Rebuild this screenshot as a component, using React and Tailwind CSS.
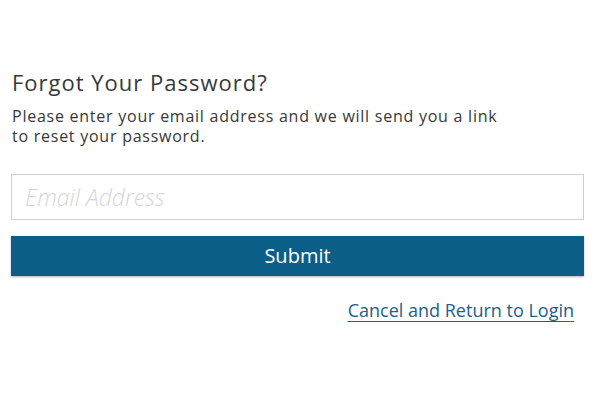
export default function App() {
  return (
    <div className="w-[600px] h-[400px] bg-white" style={{ fontFamily: "'Open Sans', sans-serif" }}>
      <div className="pl-[11px] pr-[16px] pt-[67px]">
        <h1 className="text-[22px] leading-[30px] tracking-[1px] text-[#383838] ml-[1px]">Forgot Your Password?</h1>
        <p className="mt-[10px] text-[16px] leading-[19.5px] tracking-[0.75px] text-[#383838] ml-[1px]">
          Please enter your email address and we will send you a link
          <br />
          to reset your password.
        </p>
        <input
          type="text"
          placeholder="Email Address"
          className="mt-[28px] block w-full h-[46px] border border-[#cfcfcf] px-[13px] text-[23px] font-light italic placeholder:text-[#d6d6d6] outline-none"
        />
        <button className="mt-[16px] block w-full h-[40px] bg-[#0b5e87] text-white text-[20px] shadow-[0_1px_2px_rgba(0,0,0,0.3)]">
          Submit
        </button>
        <div className="flex justify-end mt-[21px] pr-[10px]">
          <a href="#" className="text-[18px] text-[#1b5f8b] underline underline-offset-[4px] decoration-[1px]">
            Cancel and Return to Login
          </a>
        </div>
      </div>
    </div>
  );
}
